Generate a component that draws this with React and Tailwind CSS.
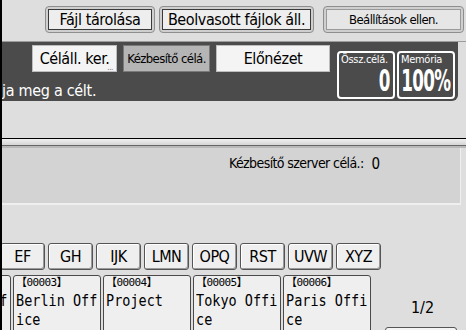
const ui = { fontFamily: '"DejaVu Sans Condensed", "Liberation Sans Narrow", "Liberation Sans", sans-serif' };
const mono = { fontFamily: '"DejaVu Sans Mono", "Liberation Mono", "Noto Sans CJK JP", monospace' };

function TopButton({ label, width, small, soft }) {
  return (
    <div
      className={`h-[27px] rounded-[4px] border border-[#8e8e8e] bg-[#cfcfcf] p-[2px] ${width}`}
    >
      <div
        className={`h-full flex items-center justify-center border ${
          soft ? "border-[#9a9a9a] bg-[#e6e6e6]" : "border-[#3a3a3a] bg-[#eeeeee]"
        }`}
      >
        <span className={small ? "text-[13px] tracking-[-0.6px]" : "text-[16px] tracking-[-0.4px]"}>
          {label}
        </span>
      </div>
    </div>
  );
}

function Counter({ label, value }) {
  return (
    <div className="w-[58px] h-[48px] rounded-[4px] border-2 border-white flex flex-col px-[2px] text-white">
      <span className="text-[11px] leading-[14px] tracking-[-0.3px] whitespace-nowrap">{label}</span>
      <div className="flex justify-end pr-[1px]">
        <span className="shrink-0 inline-block text-[30px] leading-[28px] font-bold whitespace-nowrap scale-x-[0.62] origin-right tracking-[-1px]">
          {value}
        </span>
      </div>
    </div>
  );
}

const letters = ["EF", "GH", "IJK", "LMN", "OPQ", "RST", "UVW", "XYZ"];

const tiles = [
  { id: "00002", line1: "Munich Off", line2: "ice" },
  { id: "00003", line1: "Berlin Off", line2: "ice" },
  { id: "00004", line1: "Project", line2: "" },
  { id: "00005", line1: "Tokyo Offi", line2: "ce" },
  { id: "00006", line1: "Paris Offi", line2: "ce" },
];

export default function App() {
  return (
    <div
      className="w-[466px] h-[330px] overflow-hidden bg-[#dedede] border-l-2 border-black flex flex-col text-black"
      style={ui}
    >
      {/* top buttons */}
      <div className="h-[42px] shrink-0 flex items-start pt-[6px] pl-[43px] gap-[4px] border-b border-[#9c9c9c]">
        <TopButton label="Fájl tárolása" width="w-[110px]" />
        <TopButton label="Beolvasott fájlok áll." width="w-[155px]" />
        <div className="ml-[5px]">
          <TopButton label="Beállítások ellen." width="w-[141px]" small soft />
        </div>
      </div>

      {/* dark bar */}
      <div className="h-[59px] shrink-0 mr-[8px] -ml-[2px] bg-[#4b4b4b] rounded-br-[6px] flex">
        <div className="flex-1 flex flex-col">
          <div className="flex gap-[6px] pl-[32px] pt-[3px]">
            <div className="relative w-[85px] h-[27px] bg-[#f4f4f4] border border-[#bdbdbd] flex items-center justify-center text-[16px] tracking-[-0.4px]">
              Céláll. ker.
              <span className="absolute right-[3px] bottom-[-1px] text-[8px] leading-[8px] text-[#777]">...</span>
            </div>
            <div className="w-[87px] h-[27px] bg-[#b5b5b5] border border-[#7a7a7a] flex items-center justify-center text-[13px] tracking-[-0.6px]">
              Kézbesítő célá.
            </div>
            <div className="w-[114px] h-[27px] bg-[#f4f4f4] border border-[#bdbdbd] flex items-center justify-center text-[16px] tracking-[-0.4px]">
              Előnézet
            </div>
          </div>
          <div className="text-white text-[16px] leading-[20px] pt-[9px] pl-[2px] tracking-[-0.3px]">ja meg a célt.</div>
        </div>
        <div className="flex items-center gap-[2px] pr-[3px] pt-[6px]">
          <Counter label="Össz.célá." value="0" />
          <Counter label="Memória" value="100%" />
        </div>
      </div>

      <div className="h-[37px] shrink-0" />

      {/* separator lines */}
      <div className="shrink-0 border-t border-black h-[10px] bg-gradient-to-b from-[#f0f0f0] to-[#c8c8c8] flex flex-col justify-end">
        <div className="h-[1px] bg-[#666]" />
        <div className="h-[2px] bg-[#b8b8b8]" />
      </div>

      {/* info panel */}
      <div className="h-[57px] shrink-0 bg-[#d3d3d3] mr-[5px] border-r border-b-2 border-[#efefef] pt-[5px] pl-[227px] flex items-start gap-[8px] text-[14px] tracking-[-0.6px]">
        <span>Kézbesítő szerver célá.:</span>
        <span className="text-[15px]">0</span>
      </div>

      <div className="h-[38px] shrink-0" />

      {/* alphabet row */}
      <div className="h-[27px] shrink-0 flex gap-[3px] -ml-[2px]">
        {letters.map((l) => (
          <div
            key={l}
            className="w-[45px] h-full rounded-[3px] border border-[#555] bg-[#efefef] shadow-[inset_-1px_-1px_0_#9a9a9a,inset_1px_1px_0_#ffffff] flex items-center justify-center text-[16px] tracking-[-0.5px]"
          >
            {l}
          </div>
        ))}
      </div>

      <div className="h-[5px] shrink-0" />

      {/* destinations */}
      <div className="flex-1 flex gap-[2px] -ml-[79px]">
        {tiles.map((t) => (
          <div
            key={t.id}
            className="w-[88px] shrink-0 h-[70px] rounded-t-[3px] border border-[#4a4a4a] bg-[#efefef] pl-[2px] whitespace-nowrap overflow-hidden"
            style={mono}
          >
            <div className="text-[11px] leading-[14px] tracking-[-0.6px]">【{t.id}】</div>
            <div className="text-[13.5px] leading-[19px] scale-y-[1.15] origin-top-left">{t.line1}</div>
            <div className="text-[13.5px] leading-[19px] scale-y-[1.15] origin-top-left">{t.line2}</div>
          </div>
        ))}
        <div className="flex-1 flex flex-col items-center">
          <div className="pt-[24px] text-[16px] leading-[18px] pl-[6px]">1/2</div>
          <div className="mt-[10px] ml-[2px] w-[72px] h-[20px] border border-[#555] bg-[#f4f4f4] rounded-t-[3px]" />
        </div>
      </div>
    </div>
  );
}
